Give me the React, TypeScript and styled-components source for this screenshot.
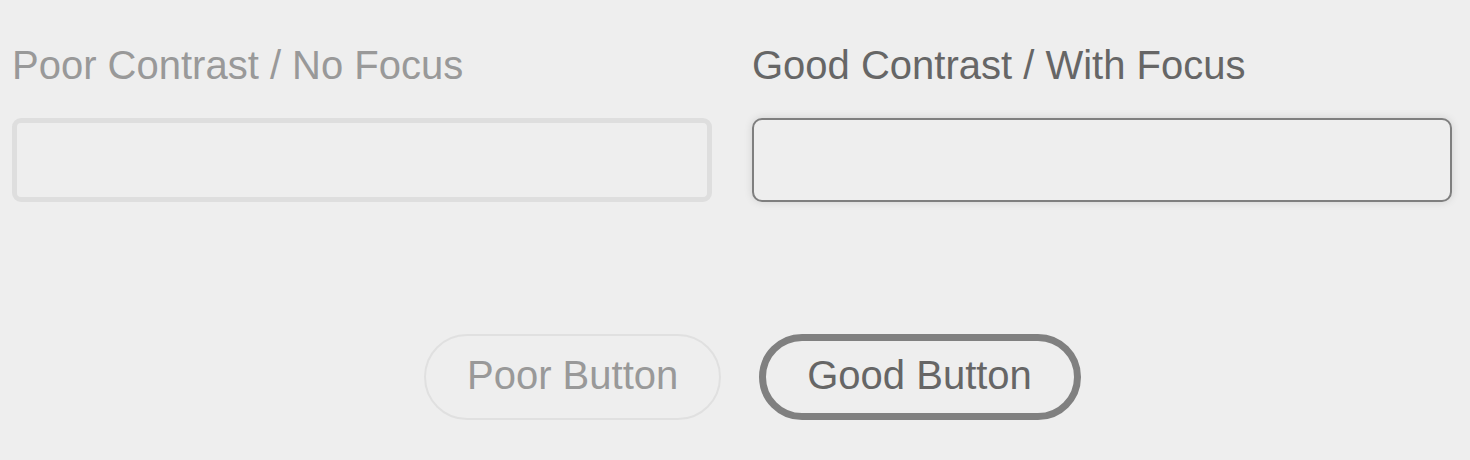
import styled, { createGlobalStyle } from 'styled-components';

const GlobalStyle = createGlobalStyle`
  html, body {
    margin: 0;
    padding: 0;
    background: #eeeeee;
  }
  body {
    font-family: "Liberation Sans", Arial, Helvetica, sans-serif;
  }
`;

const App = () => {
  return (
    <Page>
      <GlobalStyle />
      <Fields>
        <Field>
          <Label $good={false}>Poor Contrast / No Focus</Label>
          <Input $good={false} type="text" />
        </Field>
        <Field>
          <Label $good>Good Contrast / With Focus</Label>
          <Input $good type="text" />
        </Field>
      </Fields>
      <Buttons>
        <Button $good={false}>Poor Button</Button>
        <Button $good>Good Button</Button>
      </Buttons>
    </Page>
  );
};

export default App;

const Page = styled.div`
  padding: 42px 12px 0 12px;
  height: 460px;
  box-sizing: border-box;
`;

const Fields = styled.div`
  display: grid;
  grid-template-columns: 700px 700px;
  column-gap: 40px;
`;

const Field = styled.div`
  display: flex;
  flex-direction: column;
  gap: 30px;
`;

const Label = styled.label<{ $good: boolean }>`
  font-size: 40px;
  line-height: 46px;
  color: ${(p) => (p.$good ? '#666666' : '#999999')};
`;

const Input = styled.input<{ $good: boolean }>`
  box-sizing: border-box;
  width: 700px;
  height: 84px;
  margin: 0;
  background: #eeeeee;
  outline: none;
  font-family: inherit;
  font-size: 32px;
  border: ${(p) => (p.$good ? '2px solid #7f7f7f' : '5px solid #dedede')};
  border-radius: ${(p) => (p.$good ? '10px' : '9px')};
  box-shadow: ${(p) => (p.$good ? '0 0 8px rgba(0, 0, 0, 0.12)' : 'none')};
`;

const Buttons = styled.div`
  display: flex;
  gap: 38px;
  margin-top: 132px;
  padding-left: 412px;
`;

const Button = styled.button<{ $good: boolean }>`
  box-sizing: border-box;
  height: 86px;
  display: flex;
  align-items: center;
  justify-content: center;
  padding: 0 ${(p) => (p.$good ? '42px 5px 41px' : '41px 5px')};
  background: transparent;
  font-family: inherit;
  font-size: 40px;
  line-height: 46px;
  color: ${(p) => (p.$good ? '#666666' : '#999999')};
  border: ${(p) => (p.$good ? '7px solid #808080' : '2px solid #e0e0e0')};
  border-radius: 43px;
  cursor: pointer;
`;
